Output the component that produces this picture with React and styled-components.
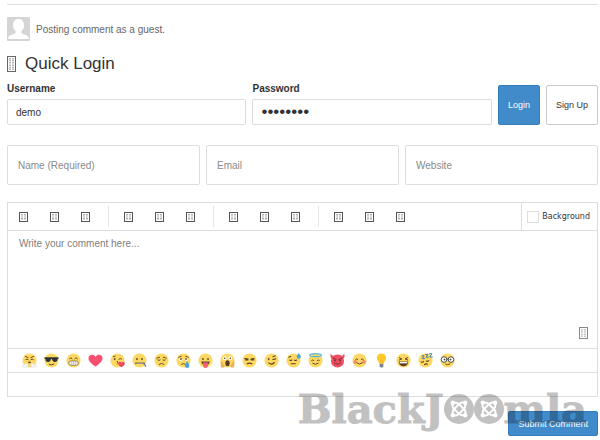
import React from 'react';
import styled, { createGlobalStyle } from 'styled-components';

const GlobalStyle = createGlobalStyle`
  * {
    box-sizing: border-box;
  }

  body {
    margin: 0;
    background-color: white;
    color: #333;
    font-family: 'Liberation Sans', Arial, sans-serif;
    font-size: 10px;
  }

  button, input, textarea {
    font-family: inherit;
    margin: 0;
  }
`;

const Container = styled.main`
  padding: 4px 2px 4px 7px;
`;

const Guest = styled.div`
  display: flex;
  align-items: center;
  gap: 6px;
  padding-top: 12px;
  border-top: 1px solid #e0e0e0;
  color: #666;
`;

const Title = styled.h3`
  display: flex;
  align-items: center;
  gap: 9px;
  margin: 11px 0 7px;
  font-size: 17px;
  line-height: 24px;
  font-weight: normal;
`;

const LoginForm = styled.form`
  display: flex;
  align-items: flex-end;
  gap: 6px;
`;

const Field = styled.div`
  flex: 1;
  min-width: 0;
`;

const Label = styled.label`
  display: block;
  margin-bottom: 4px;
  line-height: 12px;
  font-weight: bold;
`;

const Input = styled.input`
  display: block;
  width: 100%;
  min-width: 0;
  height: ${(props) => (props.$large ? '40px' : '26px')};
  padding: 0 ${(props) => (props.$large ? '10px' : '8px')};
  border: 1px solid #ddd;
  border-radius: 2px;
  background-color: white;
  color: #333;
  font-size: 10px;

  &[type='password'] {
    font-size: 17px;
  }

  &::placeholder {
    color: #8a8a8a;
  }
`;

const Button = styled.button`
  height: ${(props) => (props.$tall ? '40px' : '25px')};
  padding: 0 9px;
  border: 1px solid ${(props) => (props.$primary ? '#357ebd' : '#ccc')};
  border-radius: 2px;
  background-color: ${(props) => (props.$primary ? '#428bca' : 'white')};
  color: ${(props) => (props.$primary ? 'white' : '#333')};
  font-size: 9px;
  white-space: nowrap;
`;

const GuestFields = styled.div`
  display: grid;
  grid-template-columns: repeat(3, 1fr);
  gap: 6px;
  margin: 20px 0 17px;
`;

const Editor = styled.section`
  border: 1px solid #ddd;
`;

const Toolbar = styled.div`
  display: flex;
  height: 28px;
  border-bottom: 1px solid #ddd;
`;

const Group = styled.div`
  display: flex;
  margin: 3px 0;
  padding: 0 7px 0 4px;
  border-right: 1px solid #e5e5e5;

  &:first-child {
    padding-left: 0;
  }

  &:nth-child(4) {
    border-right: none;
  }
`;

const IconButton = styled.button`
  display: flex;
  align-items: center;
  justify-content: center;
  width: ${(props) => props.$width}px;
  padding: 0;
  border: none;
  background: none;
`;

const Background = styled.label`
  display: flex;
  align-items: center;
  gap: 3px;
  margin-left: auto;
  padding: 0 7px 0 5px;
  border-left: 1px solid #ddd;
  font-family: 'DejaVu Sans', Verdana, sans-serif;
  font-size: 8px;
`;

const Checkbox = styled.input`
  appearance: none;
  width: 12px;
  height: 12px;
  border: 1px solid #ddd;
  background-color: white;
`;

const Writing = styled.div`
  position: relative;
`;

const Textarea = styled.textarea`
  display: block;
  width: 100%;
  height: 117px;
  padding: 7px 11px;
  border: none;
  background: none;
  resize: none;
  color: #333;
  font-size: 10px;
  line-height: 12px;

  &::placeholder {
    color: #808080;
  }
`;

const Expand = styled(IconButton)`
  position: absolute;
  right: 9px;
  bottom: 9px;
`;

const Emojis = styled.div`
  display: flex;
  height: 25px;
  padding-left: 10px;
  border-top: 1px solid #ddd;
  border-bottom: 1px solid #ddd;
`;

const Status = styled.div`
  height: 23px;
`;

const Footer = styled.footer`
  position: relative;
  display: flex;
  justify-content: flex-end;
  padding-top: 14px;
`;

const Watermark = styled.div`
  position: absolute;
  top: -8px;
  right: 11px;
  display: flex;
  align-items: center;
  color: black;
  opacity: 0.24;
  font-family: 'DejaVu Serif', serif;
  font-size: 40px;
  line-height: 40px;
  font-weight: bold;
  -webkit-text-stroke: 1px black;
  pointer-events: none;
`;

const Glyph = ({ width = 9, height = 10, color = '#555' }) => (
  <svg width={width} height={height} viewBox={`0 0 ${width} ${height}`} fill='none' stroke={color}>
    <rect x='.5' y='.5' width={width - 1} height={height - 1} />
    <path
      d={`M3 2v${height / 2 - 2.5}M${width - 3} 2v${height / 2 - 2.5}M3 ${height / 2 + 0.5}v${height / 2 - 2.5}M${width - 3} ${height / 2 + 0.5}v${height / 2 - 2.5}`}
      strokeWidth='1.800'
      strokeDasharray='1.500 .5'
      opacity='.5'
    />
  </svg>
);

const Avatar = () => (
  <svg width='23' height='24' viewBox='0 0 23 24'>
    <rect width='23' height='24' rx='1' fill='#d5d5d5' />
    <path
      d='M1 22c.2-3 2-3.700 4.500-4.500 2.300-.7 3.200-1 3.200-2.200 0-1-.8-1.600-1.300-2.800-.8-.4-1.200-1-1.200-2.300C5.500 5 7.500 2 11.500 2S17.500 5 16.800 10.200c0 1.300-.4 1.900-1.200 2.300-.5 1.200-1.300 1.800-1.300 2.800 0 1.200.9 1.500 3.200 2.200 2.500.8 4.300 1.500 4.500 4.500z'
      fill='white'
    />
  </svg>
);

const eyes = (
  <g fill='#5c4326'>
    <ellipse cx='5.300' cy='6.500' rx='.9' ry='1.200' />
    <ellipse cx='10.700' cy='6.500' rx='.9' ry='1.200' />
  </g>
);

const Line = ({ d, color = '#5c4326', width = 1 }) => (
  <path d={d} fill='none' stroke={color} strokeWidth={width} strokeLinecap='round' />
);

const heart = 'M8 14.500C4.500 12 .5 9 .5 5.500.5 1.500 5.800.3 8 4c2.200-3.700 7.500-2.500 7.500 1.500 0 3.500-4 6.500-7.500 9z';

const emojis = [
  {
    name: 'Huffing',
    art: (
      <>
        <Line d='M3.500 3.500l3 1.500M12.500 3.500l-3 1.500M4 7q1.300-1 2.500 0M9.500 7q1.300-1 2.500 0' />
        <ellipse cx='8' cy='10' rx='1.500' ry='1' fill='#5c4326' />
        <path d='M6.500 11.500c-2-1-3.500 0-3.500 1-2-.5-3 .5-2.500 2 2 1.500 5 1.500 6-.5zM9.500 11.500c2-1 3.500 0 3.500 1 2-.5 3 .5 2.500 2-2 1.500-5 1.500-6-.5z' fill='#f3f3f3' stroke='#ddd' strokeWidth='.4' />
      </>
    ),
  },
  {
    name: 'Cool',
    art: (
      <>
        <path d='M.5 4.500h15v1.500l-1 .4c-.2 2.300-1 3.200-2.800 3.200S9 8.500 8.500 6.500h-1C7 8.500 6.100 9.600 4.300 9.600S1.700 8.700 1.500 6.400l-1-.4z' fill='#2e3438' />
        <Line d='M5.500 12q2.500 1.800 5-.2' />
      </>
    ),
  },
  {
    name: 'Grin',
    art: (
      <>
        <Line d='M3.800 6q1.400-2 2.800 0M9.400 6q1.400-2 2.800 0' />
        <rect x='3' y='8.500' width='10' height='4.500' rx='2' fill='white' stroke='#76603d' strokeWidth='.8' />
        <Line d='M3.500 10.700h9M6 9v3.500M8 9v3.500M10 9v3.500' color='#999' width={0.4} />
      </>
    ),
  },
  { name: 'Heart', bare: true, art: <path d={heart} fill='#f8506e' /> },
  {
    name: 'Kiss',
    art: (
      <>
        <ellipse cx='5' cy='6.500' rx='.9' ry='1.200' fill='#5c4326' />
        <Line d='M3.500 4l2-.7M9.500 6.500q1.500-1.500 3 0M7.500 9q2 .4.500 1.400 1.700.5 0 1.600' />
        <path d={heart} fill='#f04a60' transform='translate(8.500 8.500) scale(.47)' />
      </>
    ),
  },
  {
    name: 'Zipped',
    art: (
      <>
        {eyes}
        <Line d='M4 11h9' width={1.6} color='#665c4c' />
        <Line d='M5 11h7' width={0.6} color='#ddd' />
        <Line d='M12.500 11l2 3' width={1.5} color='#77817f' />
      </>
    ),
  },
  { name: 'Sad', art: <Line d='M3 5.500l3-1M13 5.500l-3-1M4 7.500q1.200 1 2.500 0M9.500 7.500q1.200 1 2.500 0M5.500 12q2.500-2 5 0' /> },
  {
    name: 'Crying',
    art: (
      <>
        <Line d='M3 4.500l2.500-1M13 4.500l-2.500-1' />
        <circle cx='5' cy='7' r='1.800' fill='white' />
        <circle cx='11' cy='7' r='1.800' fill='white' />
        {eyes}
        <Line d='M6 12q2-1.600 4 0' />
        <path d='M11.800 8.500c1.500 2.500 2.500 3.500 2.500 5a2.400 2.400 0 0 1-4.800 0c0-1.500 1.200-2.800 2.300-5z' fill='#4ba4df' />
      </>
    ),
  },
  {
    name: 'Tongue',
    art: (
      <>
        {eyes}
        <path d='M3.500 9h9q-.5 4-4.500 4t-4.500-4z' fill='#65452e' />
        <path d='M5.500 10h5v3.500a2.500 2.500 0 0 1-5 0z' fill='#f26078' />
      </>
    ),
  },
  {
    name: 'Scream',
    art: (
      <>
        <circle cx='5' cy='5.500' r='2' fill='white' />
        <circle cx='11' cy='5.500' r='2' fill='white' />
        <circle cx='5' cy='5.500' r='.8' fill='#443322' />
        <circle cx='11' cy='5.500' r='.8' fill='#443322' />
        <ellipse cx='8' cy='11' rx='2.300' ry='3.200' fill='#5b3926' />
        <path d='M.5 9q2-1 2.500 2l2 2.500-.5 2H1zM15.500 9q-2-1-2.500 2l-2 2.500.5 2H15z' fill='#e9b44d' />
      </>
    ),
  },
  { name: 'Unamused', art: <Line d='M3 6l3.500.5M9.500 6.500L13 6M3.800 7.500h2.500M10 7.500h2.500M5.500 11.500q2.500-1.500 5 0' width={1.2} /> },
  {
    name: 'Wink',
    art: (
      <>
        <ellipse cx='5' cy='6.500' rx='.9' ry='1.200' fill='#5c4326' />
        <Line d='M9.500 7l3-.7M9.500 4l2.500-1M5 10.500q3.500 3 6-.5' width={1.2} />
      </>
    ),
  },
  {
    name: 'Sweat',
    art: (
      <>
        <Line d='M3 4.500l2-.7M4 7.500q1 1 2.200 0M9 7.500q1 1 2.200 0M5.500 11.500h4.500' width={1.2} />
        <path d='M13.500 0c1 1.700 2.300 2.500 2.300 4a2.200 2.200 0 0 1-4.400 0c0-1.500 1.200-2.200 2.100-4z' fill='#4ba4df' />
      </>
    ),
  },
  {
    name: 'Angel',
    art: (
      <>
        <ellipse cx='8' cy='2.300' rx='6.300' ry='1.600' fill='none' stroke='#4fb3e0' strokeWidth='1.300' />
        <Line d='M3.800 8q1.200-1.500 2.500 0M9.700 8q1.200-1.500 2.500 0M5 11q3 2.500 6 0' />
      </>
    ),
  },
  {
    name: 'Devil',
    bare: true,
    art: (
      <>
        <circle cx='8' cy='8.500' r='7' fill='#ed4f60' />
        <path d='M1.500 6C0 4 .3 2 1 .5 1.800 2.500 3 3 4.500 3zM14.500 6C16 4 15.700 2 15 .5 14.200 2.500 13 3 11.500 3z' fill='#ed4f60' />
        <Line d='M3.500 5.500l3 1.500M12.500 5.500l-3 1.500M4.500 10.500q3.500 3 7 0' color='#7d2638' />
        <Line d='M5 8h.5M10.500 8h.5' color='#7d2638' width={1.4} />
      </>
    ),
  },
  {
    name: 'Blush',
    art: (
      <>
        <circle cx='3.300' cy='9.500' r='2' fill='#f7916b' />
        <circle cx='12.700' cy='9.500' r='2' fill='#f7916b' />
        <Line d='M3.800 7q1.200-1.800 2.500 0M9.700 7q1.200-1.800 2.500 0M5 10.500q3 2.800 6 0' />
      </>
    ),
  },
  {
    name: 'Idea',
    bare: true,
    art: (
      <>
        <path d='M8 .5c3 0 5 2.200 5 4.800 0 2.500-2.500 3.700-2.800 6.200H5.800C5.500 9 3 7.800 3 5.300 3 2.700 5 .5 8 .5z' fill='#ffc928' />
        <path d='M6 11.500h4v2.700L9 15.500H7l-1-1.300z' fill='#7b858b' />
        <Line d='M6.800 7l.7 4M9.200 7l-.7 4' color='#eda51d' width={0.5} />
      </>
    ),
  },
  {
    name: 'Laugh',
    art: (
      <>
        <Line d='M3.500 5l2.800 1.300L3.500 7.500M12.500 5L9.700 6.300l2.800 1.200' />
        <path d='M3 9h10q-.4 5-5 5T3 9z' fill='#60402a' />
        <path d='M4 9.500h8v1.500H4z' fill='white' />
      </>
    ),
  },
  {
    name: 'Sleepy',
    art: (
      <>
        <Line d='M3.500 9.500q1.500 1 2.500-.5M9 8.500q1.500 1 2.500-.5M7 12.500q1.500-1.500 3-.5' width={1.2} />
        <Line d='M4 3h2.500L4.500 6H7M8 1.500h2.500l-2 3H11M12 .8h2.800l-2.300 3.500h2.800' color='#3a7a9c' />
      </>
    ),
  },
  {
    name: 'Nerd',
    art: (
      <>
        <circle cx='4.300' cy='7' r='3' fill='white' stroke='#3e4347' />
        <circle cx='11.700' cy='7' r='3' fill='white' stroke='#3e4347' />
        <circle cx='4.800' cy='7' r='1' fill='#3e4347' />
        <circle cx='11.200' cy='7' r='1' fill='#3e4347' />
        <Line d='M7.300 6.500h1.400M6 12q2 1.300 4.500-.3' />
      </>
    ),
  },
];

const Emoji = ({ bare, children }) => (
  <svg width='15' height='15' viewBox='0 0 16 16'>
    {!bare && <circle cx='8' cy='8' r='7.500' fill='#fdd862' />}
    {children}
  </svg>
);

const JoomlaMark = () => (
  <svg width='30' height='30' viewBox='0 0 30 30'>
    <circle cx='15' cy='15' r='15' fill='currentColor' />
    {[0, 90, 180, 270].map((angle) => (
      <g key={angle} transform={`rotate(${angle} 15 15)`} fill='none' stroke='white' strokeWidth='2'>
        <path d='M8.500 9v2.500c0 1.500.4 2.300 1.400 3.300l5.600 5.600' />
        <circle cx='8.800' cy='8.800' r='2.200' fill='white' stroke='none' />
        <path d='M9 8.700h2.500c1.500 0 2.300.4 3.300 1.400l1 1' />
      </g>
    ))}
  </svg>
);

const tools = [
  ['Bold', 'Italic', 'Underline'],
  ['Link', 'Picture', 'Video'],
  ['Bulleted list', 'Numbered list', 'Quote'],
  ['Code', 'Emoji', 'Location'],
];

const App = () => {
  return (
    <>
      <GlobalStyle />
      <Container>
        <Guest>
          <Avatar />
          Posting comment as a guest.
        </Guest>
        <Title>
          <Glyph width={9} height={16} color='#666' />
          Quick Login
        </Title>
        <LoginForm onSubmit={(e) => e.preventDefault()}>
          <Field>
            <Label htmlFor='username'>Username</Label>
            <Input id='username' defaultValue='demo' />
          </Field>
          <Field>
            <Label htmlFor='password'>Password</Label>
            <Input id='password' type='password' defaultValue='demodemo' />
          </Field>
          <Button $primary $tall>Login</Button>
          <Button $tall type='button'>Sign Up</Button>
        </LoginForm>
        <GuestFields>
          <Input $large aria-label='Name' placeholder='Name (Required)' />
          <Input $large aria-label='Email' placeholder='Email' />
          <Input $large aria-label='Website' placeholder='Website' />
        </GuestFields>
        <Editor>
          <Toolbar>
            {tools.map((group) => (
              <Group key={group[0]}>
                {group.map((name) => (
                  <IconButton key={name} type='button' $width={31} aria-label={name}>
                    <Glyph />
                  </IconButton>
                ))}
              </Group>
            ))}
            <Background>
              <Checkbox type='checkbox' />
              Background
            </Background>
          </Toolbar>
          <Writing>
            <Textarea aria-label='Comment' placeholder='Write your comment here...' />
            <Expand type='button' $width={9} aria-label='Expand'>
              <Glyph width={9} height={12} color='#888' />
            </Expand>
          </Writing>
          <Emojis>
            {emojis.map((item) => (
              <IconButton key={item.name} type='button' $width={22} aria-label={item.name}>
                <Emoji bare={item.bare}>{item.art}</Emoji>
              </IconButton>
            ))}
          </Emojis>
          <Status />
        </Editor>
        <Footer>
          <Button $primary type='button'>Submit Comment</Button>
          <Watermark>
            <span>BlackJ</span>
            <JoomlaMark />
            <JoomlaMark />
            <span>mla</span>
          </Watermark>
        </Footer>
      </Container>
    </>
  );
};

export default App;
